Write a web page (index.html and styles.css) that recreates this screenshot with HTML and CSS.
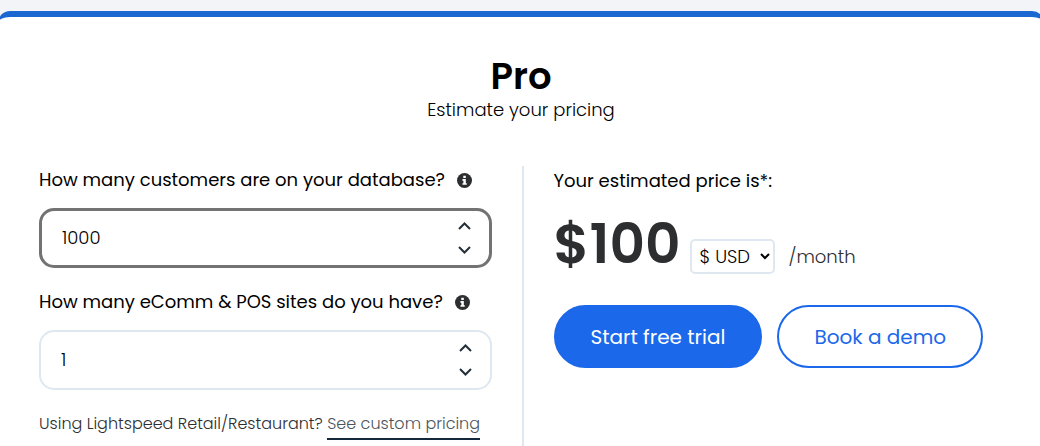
FILE: index.html
```html
<!DOCTYPE html>
<html lang="en">
<head>
    <meta charset="UTF-8">
    <meta name="viewport" content="width=device-width, initial-scale=1.0">
    <title>Pro pricing</title>
    <link rel="stylesheet" href="styles.css">
</head>
<body>
    <main class="card">
        <header class="card-header">
            <h1>Pro</h1>
            <p>Estimate your pricing</p>
        </header>
        <div class="columns">
            <form class="estimate">
                <div class="question">
                    <label for="customers">How many customers are on your database?</label>
                    <svg class="info" viewBox="0 0 16 16" aria-hidden="true"><circle cx="8" cy="8" r="8"/><path d="M6.7 2.8h2.7v2.5H6.7zM5.8 6.5h3.6v4.4h1v1.7H5.8v-1.7h1V8.2h-1z"/></svg>
                </div>
                <div class="number-box active">
                    <input type="text" inputmode="numeric" id="customers" value="1000">
                    <div class="stepper">
                        <button type="button" aria-label="More customers"><svg viewBox="0 0 12 8"><path d="M0.5 7L6 1.5 11.5 7"/></svg></button>
                        <button type="button" aria-label="Fewer customers"><svg viewBox="0 0 12 8"><path d="M0.5 1L6 6.500 11.5 1"/></svg></button>
                    </div>
                </div>
                <div class="question">
                    <label for="sites">How many eComm &amp; POS sites do you have?</label>
                    <svg class="info" viewBox="0 0 16 16" aria-hidden="true"><circle cx="8" cy="8" r="8"/><path d="M6.7 2.8h2.7v2.5H6.7zM5.8 6.5h3.6v4.4h1v1.7H5.8v-1.7h1V8.2h-1z"/></svg>
                </div>
                <div class="number-box">
                    <input type="text" inputmode="numeric" id="sites" value="1">
                    <div class="stepper">
                        <button type="button" aria-label="More sites"><svg viewBox="0 0 12 8"><path d="M0.5 7L6 1.5 11.5 7"/></svg></button>
                        <button type="button" aria-label="Fewer sites"><svg viewBox="0 0 12 8"><path d="M0.5 1L6 6.500 11.5 1"/></svg></button>
                    </div>
                </div>
                <p class="note">Using Lightspeed Retail/Restaurant? <a href="#">See custom pricing</a></p>
            </form>
            <section class="result">
                <p class="result-title">Your estimated price is*:</p>
                <div class="price-row">
                    <strong class="price">$100</strong>
                    <select class="currency" aria-label="Currency">
                        <option>$ USD</option>
                    </select>
                    <span class="period">/month</span>
                </div>
                <div class="actions">
                    <button type="button" class="btn btn-primary">Start free trial</button>
                    <button type="button" class="btn btn-outline">Book a demo</button>
                </div>
            </section>
        </div>
    </main>
</body>
</html>
```
FILE: styles.css
```css
* {
    box-sizing: border-box;
}
body {
    display: flex;
    flex-direction: column;
    min-height: 100vh;
    margin: 0;
    padding-top: 11px;
    overflow-x: hidden;
    background: #f3f4f8;
    color: #000;
    font-family: Poppins, Inter, sans-serif;
    font-size: 18px;
    line-height: 28px;
}
h1, p {
    margin: 0;
}
button, input, select {
    font-family: inherit;
    color: inherit;
}
.card {
    display: flex;
    flex-direction: column;
    flex: 1;
    margin: 0 -4px 0 -2px;
    background: #fff;
    border-top: 6px solid #1a67d2;
    border-radius: 12px 12px 0 0;
    padding-top: 39px;
}
.card-header {
    text-align: center;
    margin-bottom: 42px;
}
h1 {
    font-size: 37px;
    font-weight: 600;
    line-height: 40px;
}
.card-header p {
    font-size: 18px;
    font-weight: 300;
}
.columns {
    display: grid;
    grid-template-columns: 1fr 1fr;
    flex: 1;
    padding: 0 36px 0 41px;
}
.estimate {
    border-right: 2px solid #dfe7f0;
    padding-right: 30px;
}
.question {
    display: flex;
    align-items: center;
    gap: 12px;
    margin-bottom: 14px;
}
.info {
    width: 15px;
    height: 15px;
    fill: #2d2e30;
}
.info path {
    fill: #fff;
}
.number-box {
    display: flex;
    align-items: center;
    height: 60px;
    margin-bottom: 20px;
    padding: 0 18px 0 20px;
    border: 2px solid #dfe7f0;
    border-radius: 15px;
}
.number-box.active {
    border: 3px solid #737373;
}
.number-box input {
    flex: 1;
    min-width: 0;
    padding: 0 0 2px;
    border: none;
    outline: none;
    background: none;
    font-size: 18px;
    font-weight: 300;
}
.stepper {
    display: flex;
    flex-direction: column;
}
.stepper button {
    display: flex;
    align-items: center;
    height: 24px;
    padding: 0;
    border: none;
    background: none;
    cursor: pointer;
}
.stepper svg {
    width: 13px;
    height: 8px;
    fill: none;
    stroke: #252f38;
    stroke-width: 2;
}
.note {
    color: #2d2e30;
    font-size: 16px;
    font-weight: 300;
    line-height: 28px;
    white-space: nowrap;
}
.note a {
    display: inline-block;
    border-bottom: 2px solid #14283c;
    color: #4c555d;
    text-decoration: none;
}
.result {
    padding: 1px 0 0 30px;
}
.price-row {
    display: flex;
    align-items: flex-end;
    margin-bottom: 31px;
}
.price {
    color: #2d2e30;
    font-size: 55px;
    font-weight: 600;
    line-height: 60px;
    margin: 19px 10px 0 0;
}
.currency {
    width: 85px;
    height: 35px;
    padding: 0 0 0 3px;
    border: 2px solid #dfe7f0;
    border-radius: 5px;
    background: #fff;
    font-size: 18px;
    font-weight: 300;
}
.period {
    margin: 0 0 3px 13px;
    color: #2d2e30;
    font-weight: 300;
}
.actions {
    display: flex;
    gap: 15px;
}
.btn {
    height: 63px;
    padding: 0 35px;
    border: 2px solid #1b68ea;
    border-radius: 32px;
    font-size: 20px;
    white-space: nowrap;
    cursor: pointer;
}
.btn-primary {
    background: #1b68ea;
    color: #fff;
}
.btn-outline {
    background: #fff;
    color: #1b68ea;
}
```
